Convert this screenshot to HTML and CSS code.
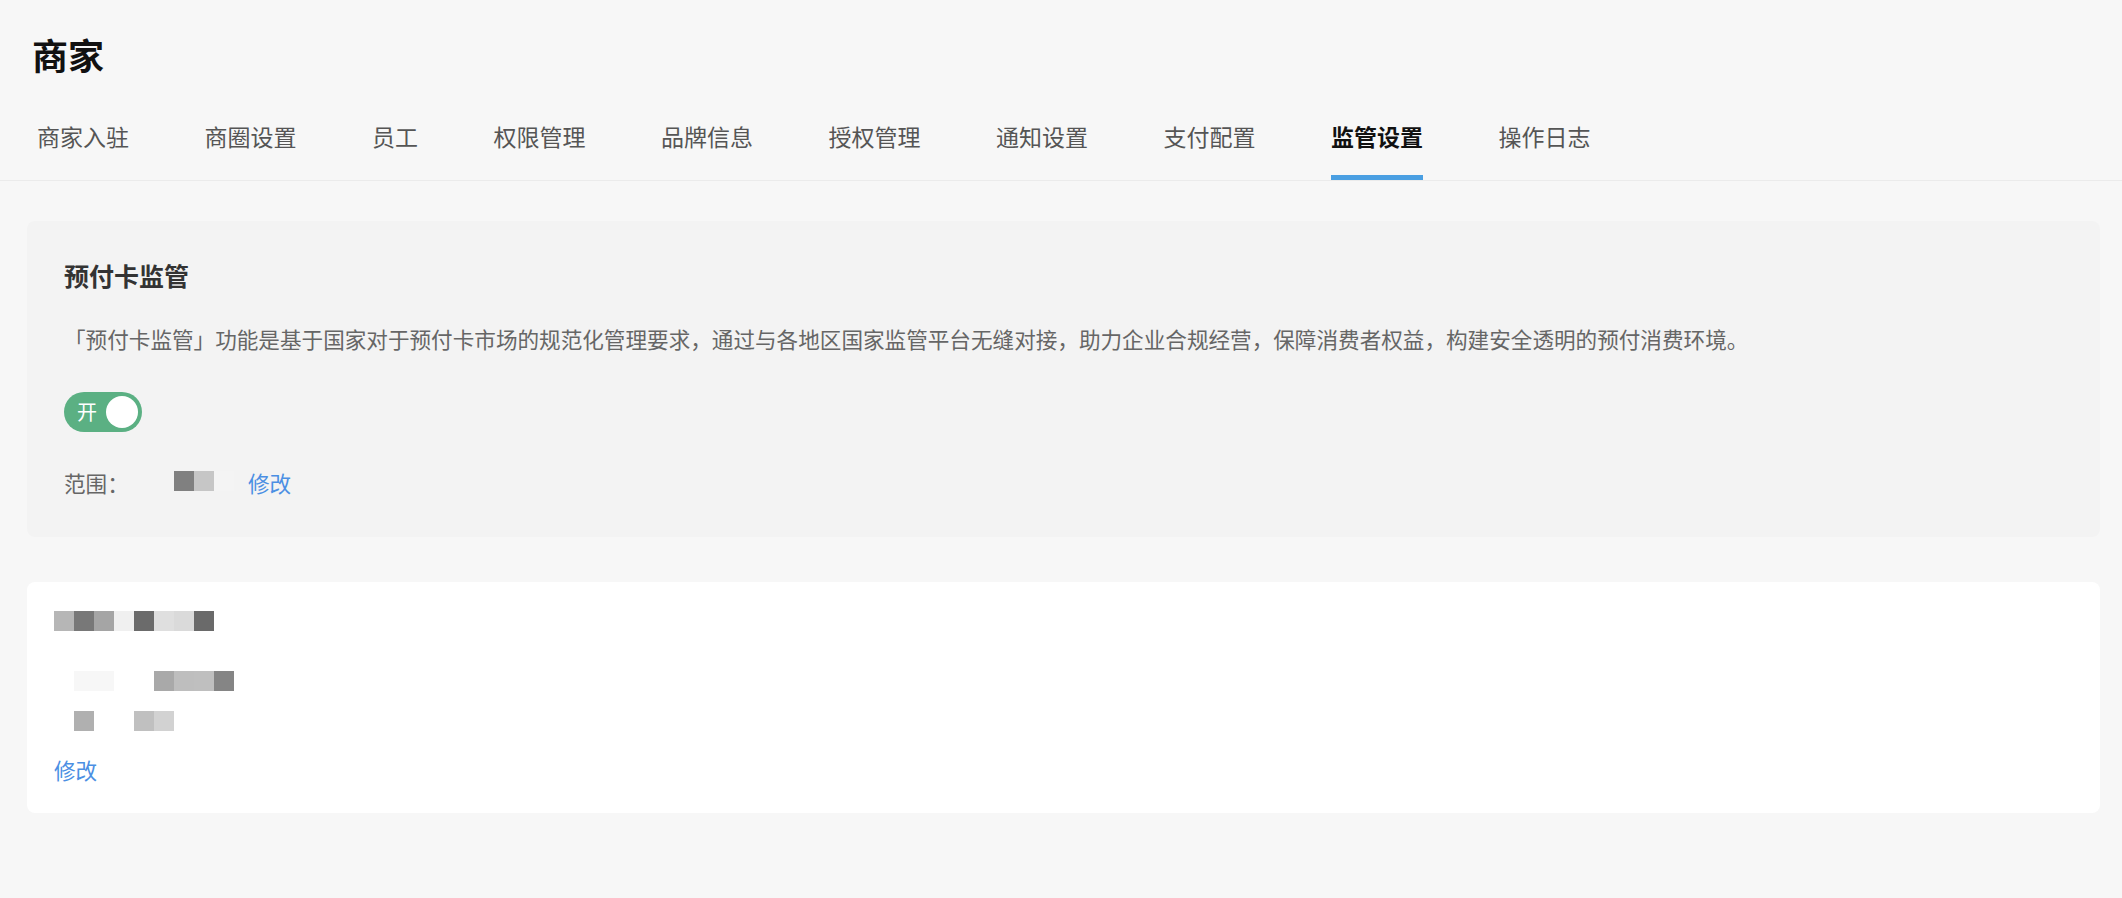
FILE: index.html
```html
<!DOCTYPE html>
<html lang="zh-CN">
<head>
    <meta charset="UTF-8">
    <meta name="viewport" content="width=device-width, initial-scale=1.0">
    <title>商家 - 监管设置</title>
    <link rel="stylesheet" href="styles.css">
</head>
<body>
    <header class="page-header">
        <h1>商家</h1>
        <nav class="tabs">
            <a class="tab">商家入驻</a>
            <a class="tab">商圈设置</a>
            <a class="tab">员工</a>
            <a class="tab">权限管理</a>
            <a class="tab">品牌信息</a>
            <a class="tab">授权管理</a>
            <a class="tab">通知设置</a>
            <a class="tab">支付配置</a>
            <a class="tab active">监管设置</a>
            <a class="tab">操作日志</a>
        </nav>
    </header>

    <main class="content">
        <section class="card card-muted">
            <h2>预付卡监管</h2>
            <p class="desc">「预付卡监管」功能是基于国家对于预付卡市场的规范化管理要求，通过与各地区国家监管平台无缝对接，助力企业合规经营，保障消费者权益，构建安全透明的预付消费环境。</p>

            <label class="switch">
                <span class="switch-text">开</span>
                <span class="switch-knob"></span>
            </label>

            <div class="scope">
                <span class="scope-label">范围：</span>
                <span class="mosaic">
                    <i class="px g80"></i><i class="px gc6"></i><i class="px gf4"></i>
                </span>
                <a class="link">修改</a>
            </div>
        </section>

        <section class="card">
            <!-- masked content -->
            <div class="mosaic">
                <i class="px gb6"></i><i class="px g78"></i><i class="px ga5"></i><i class="px gf0"></i><i class="px g6b"></i><i class="px gdf"></i><i class="px gda"></i><i class="px g6a"></i>
            </div>
            <div class="mask-row first">
                <span class="mosaic"><i class="px gf7"></i><i class="px gf7"></i></span>
                <span class="mosaic"><i class="px ga9"></i><i class="px gbe"></i><i class="px gbf"></i><i class="px g85"></i></span>
            </div>
            <div class="mask-row">
                <span class="mosaic"><i class="px gb0"></i></span>
                <span class="mosaic"><i class="px gc0"></i><i class="px gd2"></i></span>
            </div>
            <a class="link edit">修改</a>
        </section>
    </main>
</body>
</html>
```

FILE: styles.css
```css
:root {
    --page-bg: #f7f7f7;
    --muted-card: #f3f3f3;
    --text-color: #333;
    --light-text: #666;
    --tab-text: #555;
    --primary: #4a9fe2;
    --link: #4b8fe3;
    --green: #5bb083;
    --border: #ebebeb;
}

body {
    margin: 0;
    background-color: var(--page-bg);
    font-family: "Noto Sans CJK SC", "Noto Sans", sans-serif;
    color: var(--text-color);
}

.page-header {
    padding: 29px 0 0 32px;
    border-bottom: 1px solid var(--border);
}

h1 {
    margin: 0;
    font-size: 36px;
    line-height: 50px;
    font-weight: 700;
    color: #111;
}

.tabs {
    display: flex;
    gap: 75.5px;
    margin-top: 41px;
    padding-left: 5px;
}

.tab {
    font-size: 23px;
    line-height: 32px;
    padding-bottom: 23px;
    border-bottom: 5px solid transparent;
    color: var(--tab-text);
    cursor: pointer;
}

.tab.active {
    color: #111;
    font-weight: 700;
    border-bottom-color: var(--primary);
}

.content {
    padding: 40px 22px 40px 27px;
}

.card {
    background-color: #fff;
    border-radius: 8px;
    padding: 29px 27px 27px;
}

.card-muted {
    background-color: var(--muted-card);
    padding: 37px 37px 38px;
    margin-bottom: 45px;
}

h2 {
    margin: 0;
    font-size: 25px;
    line-height: 34px;
    font-weight: 700;
    color: var(--text-color);
}

.desc {
    margin: 31px 0 0;
    font-size: 21.6px;
    line-height: 32px;
    color: var(--light-text);
}

.switch {
    display: flex;
    align-items: center;
    justify-content: space-between;
    box-sizing: border-box;
    width: 78px;
    height: 40px;
    margin-top: 37px;
    padding: 0 4px 0 13px;
    border-radius: 20px;
    background-color: var(--green);
    cursor: pointer;
}

.switch-text {
    color: #fff;
    font-size: 20px;
    line-height: 20px;
}

.switch-knob {
    width: 32px;
    height: 32px;
    border-radius: 50%;
    background-color: #fff;
}

.scope {
    display: flex;
    align-items: center;
    margin-top: 35px;
    font-size: 21.6px;
    line-height: 32px;
    color: var(--light-text);
}

.scope-label {
    width: 110px;
}

.scope .mosaic {
    margin-top: -4px;
}

.link {
    color: var(--link);
    cursor: pointer;
    font-size: 21.6px;
    line-height: 32px;
}

.scope .link {
    margin-left: 14px;
}

.mosaic {
    display: flex;
}

.px {
    display: block;
    width: 20px;
    height: 20px;
}

.mask-row {
    display: flex;
    gap: 40px;
    margin-top: 20px;
    padding-left: 20px;
}

.mask-row.first {
    margin-top: 40px;
}

.edit {
    display: block;
    margin-top: 23px;
}

/* mosaic shades */
.g6a { background: #6a6a6a; }
.g6b { background: #6b6b6b; }
.g78 { background: #787878; }
.g80 { background: #808080; }
.g85 { background: #858585; }
.ga5 { background: #a5a5a5; }
.ga9 { background: #a9a9a9; }
.gb0 { background: #b0b0b0; }
.gb6 { background: #b6b6b6; }
.gbe { background: #bebebe; }
.gbf { background: #bfbfbf; }
.gc0 { background: #c0c0c0; }
.gc6 { background: #c6c6c6; }
.gd2 { background: #d2d2d2; }
.gda { background: #dadada; }
.gdf { background: #dfdfdf; }
.gf0 { background: #f0f0f0; }
.gf4 { background: #f4f4f4; }
.gf7 { background: #f7f7f7; }
```
